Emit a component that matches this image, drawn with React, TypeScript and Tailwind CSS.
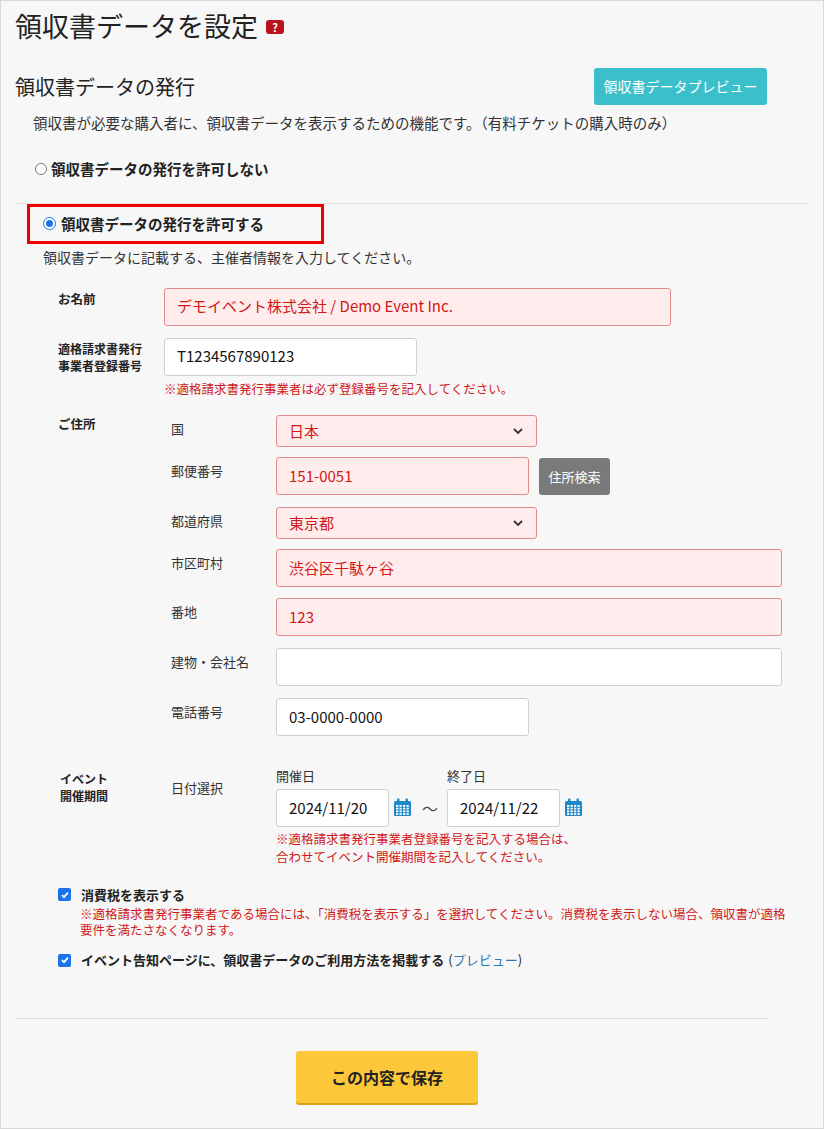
const font = { fontFamily: '"Noto Sans CJK JP", "Noto Sans", sans-serif' };

function Cal() {
  return (
    <svg width="19" height="19" viewBox="0 0 19 19" className="shrink-0">
      <rect x="1" y="3" width="17" height="15" rx="1.5" fill="#1e88c8" />
      <rect x="4" y="0.5" width="2.5" height="4.5" rx="1" fill="#1e88c8" />
      <rect x="12.5" y="0.5" width="2.5" height="4.5" rx="1" fill="#1e88c8" />
      {[0, 1, 2, 3].map((r) =>
        [0, 1, 2, 3].map((c) => (
          <rect key={`${r}-${c}`} x={3 + c * 3.5} y={7 + r * 2.7} width="2.3" height="1.8" fill="#fff" />
        ))
      )}
    </svg>
  );
}

function Chevron() {
  return (
    <svg width="12" height="12" viewBox="0 0 12 12" className="absolute right-3 top-1/2 -translate-y-1/2">
      <path d="M2 4l4 4 4-4" fill="none" stroke="#333" strokeWidth="1.8" />
    </svg>
  );
}

const pink = "border border-[#e58a8a] bg-[#ffecec] text-[#d01818] rounded-[3px] px-3 text-[15px] flex items-center";
const white = "border border-[#cfcfcf] bg-white text-[#111] rounded-[3px] px-3 text-[15px] flex items-center";

function Sub({ label, children, gap = "mb-[11px]" }: { label: string; children: React.ReactNode; gap?: string }) {
  return (
    <div className={`flex ${gap}`}>
      <div className="w-[105px] shrink-0 pt-[4px] text-[13px] text-[#333]">{label}</div>
      <div className="flex-1">{children}</div>
    </div>
  );
}

function Check() {
  return (
    <span className="w-[13px] h-[13px] rounded-[2px] bg-[#1a73e8] flex items-center justify-center mr-[10px] shrink-0">
      <svg width="10" height="10" viewBox="0 0 10 10"><path d="M2 5.2l2 2 4-4.5" fill="none" stroke="#fff" strokeWidth="1.8" /></svg>
    </span>
  );
}

export default function App() {
  return (
    <div style={font} className="w-[824px] h-[1129px] bg-[#f7f7f7] border border-[#d8d8d8] text-[#222] overflow-hidden">
      <div className="flex items-center pl-[14px] pt-[8px] h-[40px]">
        <h1 className="text-[27px] leading-none">領収書データを設定</h1>
        <span className="ml-[8px] mt-[4px] inline-flex items-center justify-center w-[18px] h-[14px] rounded-[3px] bg-[#b8141b] text-white text-[11px] font-bold leading-none">?</span>
      </div>

      <div className="flex items-center justify-between pl-[14px] pr-[56px] mt-[27px]">
        <h2 className="text-[20px]">領収書データの発行</h2>
        <button className="w-[173px] h-[37px] rounded-[3px] bg-[#3bbfcb] text-white text-[14px]">領収書データプレビュー</button>
      </div>
      <p className="pl-[32px] mt-[7px] text-[14.5px] text-[#333]">領収書が必要な購入者に、領収書データを表示するための機能です。（有料チケットの購入時のみ）</p>

      <label className="flex items-center pl-[34px] mt-[24px] text-[14.5px] font-bold">
        <span className="w-[12px] h-[12px] rounded-full border border-[#777] bg-white mr-[4px]" />
        領収書データの発行を許可しない
      </label>
      <div className="mt-[23px] mx-[14px] border-t border-[#e2e2e2]" />

      <div className="ml-[26px] w-[297px] h-[40px] border-[3px] border-[#ee0000] flex items-center pl-[13px] text-[14.5px] font-bold">
        <span className="w-[13px] h-[13px] rounded-full border-[1.5px] border-[#1a73e8] bg-white flex items-center justify-center mr-[5px]">
          <span className="w-[7px] h-[7px] rounded-full bg-[#1a73e8]" />
        </span>
        領収書データの発行を許可する
      </div>
      <p className="pl-[42px] mt-[3px] text-[14px] text-[#333]">領収書データに記載する、主催者情報を入力してください。</p>

      <div className="pl-[57px] mt-[20px]">
        <div className="flex mb-[12px]">
          <div className="w-[106px] shrink-0 pt-[2px] text-[12.5px] font-bold">お名前</div>
          <div className={`${pink} w-[507px] h-[38px]`}>デモイベント株式会社 / Demo Event Inc.</div>
        </div>

        <div className="flex mb-[17px]">
          <div className="w-[106px] shrink-0 pt-[2px] text-[12px] font-bold leading-[17px]">適格請求書発行<br />事業者登録番号</div>
          <div>
            <div className={`${white} w-[253px] h-[38px]`}>T1234567890123</div>
            <div className="text-[12.5px] text-[#d01818] mt-[4px]">※適格請求書発行事業者は必ず登録番号を記入してください。</div>
          </div>
        </div>

        <div className="flex">
          <div className="w-[113px] shrink-0 text-[12.5px] font-bold">ご住所</div>
          <div className="flex-1 pr-[41px]">
            <Sub label="国" gap="mb-[10px]">
              <div className={`${pink} relative w-[261px] h-[32px] text-[#d01818]`}>日本<Chevron /></div>
            </Sub>
            <Sub label="郵便番号" gap="mb-[12px]">
              <div className="flex items-center gap-[10px]">
                <div className={`${pink} w-[253px] h-[38px]`}>151-0051</div>
                <button className="w-[71px] h-[37px] rounded-[3px] bg-[#7a7a7a] text-white text-[13px]">住所検索</button>
              </div>
            </Sub>
            <Sub label="都道府県" gap="mb-[10px]">
              <div className={`${pink} relative w-[261px] h-[32px]`}>東京都<Chevron /></div>
            </Sub>
            <Sub label="市区町村">
              <div className={`${pink} w-full h-[38px]`}>渋谷区千駄ヶ谷</div>
            </Sub>
            <Sub label="番地" gap="mb-[12px]">
              <div className={`${pink} w-full h-[38px]`}>123</div>
            </Sub>
            <Sub label="建物・会社名" gap="mb-[12px]">
              <div className={`${white} w-full h-[38px]`} />
            </Sub>
            <Sub label="電話番号">
              <div className={`${white} w-[253px] h-[38px]`}>03-0000-0000</div>
            </Sub>
          </div>
        </div>

        <div className="flex mt-[19px]">
          <div className="w-[113px] shrink-0 text-[12px] font-bold leading-[17px] pl-[2px] pt-[4px]">イベント<br />開催期間</div>
          <div className="w-[105px] shrink-0 pt-[12px] text-[13px] text-[#333]">日付選択</div>
          <div>
            <div className="flex text-[13px] text-[#333]">
              <span className="w-[171px]">開催日</span>
              <span>終了日</span>
            </div>
            <div className="flex items-center mt-[3px]">
              <div className={`${white} w-[113px] h-[38px]`}>2024/11/20</div>
              <span className="ml-[4px]"><Cal /></span>
              <span className="ml-[10px] mr-[9px] text-[16px] text-[#444]">〜</span>
              <div className={`${white} w-[113px] h-[38px]`}>2024/11/22</div>
              <span className="ml-[4px]"><Cal /></span>
            </div>
            <div className="text-[12.5px] text-[#d01818] mt-[3px] leading-[18px]">
              ※適格請求書発行事業者登録番号を記入する場合は、<br />合わせてイベント開催期間を記入してください。
            </div>
          </div>
        </div>
      </div>

      <div className="pl-[57px] mt-[19px]">
        <div className="flex items-center text-[13px] font-bold">
          <Check />
          消費税を表示する
        </div>
        <div className="pl-[22px] pr-[28px] text-[12.5px] text-[#d01818] leading-[16px] mt-[2px]">
          ※適格請求書発行事業者である場合には、「消費税を表示する」を選択してください。消費税を表示しない場合、領収書が適格要件を満たさなくなります。
        </div>
        <div className="flex items-center text-[13px] mt-[12px]">
          <Check />
          <span className="font-bold">イベント告知ページに、領収書データのご利用方法を掲載する</span>
          <span className="ml-[4px]">(<span className="text-[#2a7ab8]">プレビュー</span>)</span>
        </div>
      </div>

      <div className="mt-[48px] ml-[14px] w-[753px] border-t border-[#dcdcdc]" />
      <div className="flex justify-center pr-[50px] mt-[32px]">
        <button className="w-[182px] h-[52px] rounded-[3px] bg-[#fcc83a] text-[16px] font-bold text-[#222] shadow-[0_2px_0_#d9a520]">この内容で保存</button>
      </div>
    </div>
  );
}
